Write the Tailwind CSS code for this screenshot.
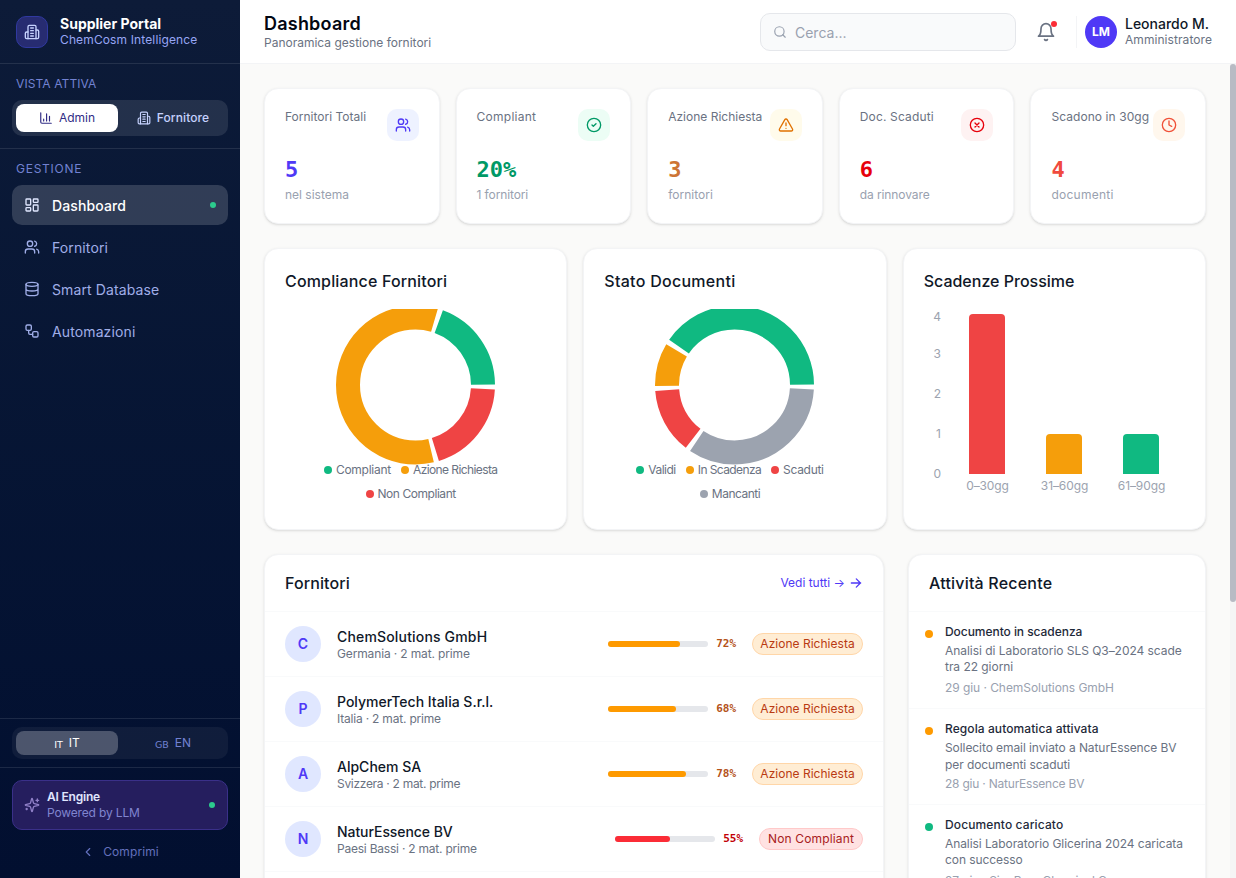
<!DOCTYPE html>
<html lang="it">

<head>
	<meta charset="UTF-8">
	<meta name="viewport" content="width=device-width, initial-scale=1.0">
	<title>Supplier Portal</title>
	<script src="https://cdn.jsdelivr.net/npm/@tailwindcss/browser@4"></script>
</head>

<body class="font-['Inter',sans-serif] bg-[#fafaf9] text-gray-900 h-screen flex overflow-hidden">
	<!-- Icons -->
	<svg class="hidden">
		<symbol id="i-building" viewBox="0 0 24 24"><path d="M6 22V4a2 2 0 0 1 2-2h8a2 2 0 0 1 2 2v18Z"/><path d="M6 12H4a2 2 0 0 0-2 2v6a2 2 0 0 0 2 2h2"/><path d="M18 9h2a2 2 0 0 1 2 2v9a2 2 0 0 1-2 2h-2"/><path d="M10 6h4M10 10h4M10 14h4M10 18h4"/></symbol>
		<symbol id="i-chart" viewBox="0 0 24 24"><path d="M3 3v16a2 2 0 0 0 2 2h16M18 17V9M13 17V5M8 17v-3"/></symbol>
		<symbol id="i-dashboard" viewBox="0 0 24 24"><rect width="7" height="9" x="3" y="3" rx="1"/><rect width="7" height="5" x="14" y="3" rx="1"/><rect width="7" height="9" x="14" y="12" rx="1"/><rect width="7" height="5" x="3" y="16" rx="1"/></symbol>
		<symbol id="i-users" viewBox="0 0 24 24"><path d="M16 21v-2a4 4 0 0 0-4-4H6a4 4 0 0 0-4 4v2"/><circle cx="9" cy="7" r="4"/><path d="M22 21v-2a4 4 0 0 0-3-3.87M16 3.13a4 4 0 0 1 0 7.75"/></symbol>
		<symbol id="i-database" viewBox="0 0 24 24"><ellipse cx="12" cy="5" rx="9" ry="3"/><path d="M3 5v14a9 3 0 0 0 18 0V5M3 12a9 3 0 0 0 18 0"/></symbol>
		<symbol id="i-workflow" viewBox="0 0 24 24"><rect width="8" height="8" x="3" y="3" rx="2"/><path d="M7 11v4a2 2 0 0 0 2 2h4"/><rect width="8" height="8" x="13" y="13" rx="2"/></symbol>
		<symbol id="i-sparkles" viewBox="0 0 24 24"><path d="M9.937 15.5A2 2 0 0 0 8.5 14.063l-6.135-1.582a.5.5 0 0 1 0-.962L8.5 9.936A2 2 0 0 0 9.937 8.5l1.582-6.135a.5.5 0 0 1 .963 0L14.063 8.5A2 2 0 0 0 15.5 9.937l6.135 1.581a.5.5 0 0 1 0 .964L15.5 14.063a2 2 0 0 0-1.437 1.437l-1.582 6.135a.5.5 0 0 1-.963 0z"/><path d="M20 3v4M22 5h-4M4 17v2M5 18H3"/></symbol>
		<symbol id="i-chevron" viewBox="0 0 24 24"><path d="m15 18-6-6 6-6"/></symbol>
		<symbol id="i-search" viewBox="0 0 24 24"><circle cx="11" cy="11" r="8"/><path d="m21 21-4.3-4.3"/></symbol>
		<symbol id="i-bell" viewBox="0 0 24 24"><path d="M6 8a6 6 0 0 1 12 0c0 7 3 9 3 9H3s3-2 3-9M10.3 21a1.94 1.94 0 0 0 3.4 0"/></symbol>
		<symbol id="i-check" viewBox="0 0 24 24"><circle cx="12" cy="12" r="10"/><path d="m9 12 2 2 4-4"/></symbol>
		<symbol id="i-alert" viewBox="0 0 24 24"><path d="m21.73 18-8-14a2 2 0 0 0-3.48 0l-8 14A2 2 0 0 0 4 21h16a2 2 0 0 0 1.73-3M12 9v4M12 17h.01"/></symbol>
		<symbol id="i-x" viewBox="0 0 24 24"><circle cx="12" cy="12" r="10"/><path d="m15 9-6 6M9 9l6 6"/></symbol>
		<symbol id="i-clock" viewBox="0 0 24 24"><circle cx="12" cy="12" r="10"/><path d="M12 6v6l4 2"/></symbol>
		<symbol id="i-arrow" viewBox="0 0 24 24"><path d="M4 12h16M12.5 5l7 7-7 7"/></symbol>
	</svg>

	<!-- Sidebar -->
	<aside class="w-60 shrink-0 flex flex-col bg-linear-to-b from-[#0d1b38] to-[#020f30] [&_svg]:fill-none [&_svg]:stroke-current [&_svg]:stroke-2 [&_svg]:[stroke-linecap:round] [&_svg]:[stroke-linejoin:round]">
		<div class="h-16 px-4 flex items-center gap-3 border-b border-white/10">
			<div class="size-8 rounded-[10px] bg-[#272c71] border border-[#3039a0] flex items-center justify-center text-indigo-200">
				<svg class="size-4"><use href="#i-building"/></svg>
			</div>
			<div>
				<div class="text-sm leading-4 font-bold text-white">Supplier Portal</div>
				<div class="text-xs leading-4 text-[#97a6f5] tracking-[0.13px]">ChemCosm Intelligence</div>
			</div>
		</div>

		<div class="h-[85px] px-3 pt-3 border-b border-white/10">
			<div class="px-1 text-xs leading-4 text-[#7282d2] tracking-[0.1px]">VISTA ATTIVA</div>
			<div class="mt-2 h-9 p-1 grid grid-cols-2 gap-1 rounded-[10px] bg-white/10 text-xs font-medium">
				<div class="rounded-lg bg-white text-[#312c85] font-normal flex items-center justify-center gap-1.5"><svg class="size-3.5"><use href="#i-chart"/></svg>Admin</div>
				<div class="text-indigo-200 flex items-center justify-center gap-1.5 tracking-[0.08px]"><svg class="size-3.5"><use href="#i-building"/></svg>Fornitore</div>
			</div>
		</div>

		<nav class="px-3 pt-3 flex-1">
			<div class="px-1 mb-2 text-xs leading-4 text-[#7282d2] tracking-[0.75px]">GESTIONE</div>
			<div class="grid gap-0.5 text-sm text-[#a0aee8] tracking-[0.12px] [&>a]:h-10 [&>a]:px-3 [&>a]:flex [&>a]:items-center [&>a]:gap-3 [&>a]:rounded-[10px]">
				<a class="bg-white/16 text-white font-medium"><svg class="size-4 text-indigo-100"><use href="#i-dashboard"/></svg><span class="pt-0.5">Dashboard</span><i class="ml-auto size-1.5 rounded-full bg-[#2ccb8d]"></i></a>
				<a><svg class="size-4"><use href="#i-users"/></svg><span class="pt-0.5">Fornitori</span></a>
				<a><svg class="size-4"><use href="#i-database"/></svg><span class="pt-0.5">Smart Database</span></a>
				<a><svg class="size-4"><use href="#i-workflow"/></svg><span class="pt-0.5">Automazioni</span></a>
			</div>
		</nav>

		<div class="h-[49px] shrink-0 px-3 pt-2 border-t border-white/10">
			<div class="h-8 p-1 grid grid-cols-2 gap-1 rounded-[10px] bg-white/5 text-xs">
				<div class="rounded-lg bg-white/25 text-white flex items-center justify-center gap-1.5"><span class="font-['DejaVu_Sans'] text-[9.5px] pt-1">IT</span>IT</div>
				<div class="text-[#7282d2] flex items-center justify-center gap-1.5"><span class="font-['DejaVu_Sans'] text-[9.5px] pt-1">GB</span>EN</div>
			</div>
		</div>
		<div class="h-[111px] shrink-0 px-3 pt-3 border-t border-white/10">
			<div class="h-[50px] pl-[11px] pr-3 flex items-center gap-[7px] rounded-[10px] bg-[#251e5e] border border-[#3a3089]">
				<svg class="size-4 text-[#9080c8]"><use href="#i-sparkles"/></svg>
				<div class="text-xs leading-4">
					<div class="font-semibold text-indigo-100 tracking-[-0.2px]">AI Engine</div>
					<div class="text-[#8085d0] tracking-[-0.15px]">Powered by LLM</div>
				</div>
				<span class="ml-auto size-1.5 rounded-full bg-[#2ccb8d]"></span>
			</div>
			<div class="mt-[14px] flex items-center justify-center gap-2 text-xs leading-4 text-[#6370bd] tracking-[0.1px]"><svg class="size-3.5"><use href="#i-chevron"/></svg>Comprimi</div>
		</div>
	</aside>

	<div class="flex-1 min-w-0 flex flex-col [&_svg]:[stroke-linecap:round] [&_svg]:[stroke-linejoin:round]">
		<!-- Header -->
		<header class="h-16 shrink-0 px-6 flex items-center bg-white border-b border-gray-100">
			<div>
				<h1 class="pt-px text-lg leading-5 font-semibold text-gray-950 tracking-[0.22px]">Dashboard</h1>
				<p class="mt-px text-xs leading-4 text-gray-500">Panoramica gestione fornitori</p>
			</div>
			<div class="ml-auto w-64 h-[38px] px-3 flex items-center gap-2 rounded-[10px] bg-gray-50 border border-gray-200 text-sm text-gray-400">
				<svg class="size-3.5 fill-none stroke-current stroke-2"><use href="#i-search"/></svg><span class="pt-0.5">Cerca...</span>
			</div>
			<div class="relative ml-5 text-gray-500">
				<svg class="size-5 fill-none stroke-current stroke-2"><use href="#i-bell"/></svg>
				<span class="absolute -top-px -right-px size-1.5 rounded-full bg-[#fb2c36]"></span>
			</div>
			<div class="ml-5 pl-2 h-8 flex items-center gap-2 border-l border-gray-100">
				<div class="size-8 rounded-full bg-[#4f39f6] text-white text-xs font-bold flex items-center justify-center">LM</div>
				<div>
					<div class="text-sm leading-4 font-medium">Leonardo M.</div>
					<div class="text-xs leading-4 text-gray-500 tracking-[0.07px]">Amministratore</div>
				</div>
			</div>
		</header>

		<div class="flex-1 min-h-0 flex">
			<main class="flex-1 min-w-0 p-6 overflow-hidden">
				<!-- KPI -->
				<div class="grid grid-cols-5 gap-4 [&>div]:h-34 [&>div]:p-5 [&>div]:rounded-[14px] [&>div]:bg-white [&>div]:border [&>div]:border-gray-100 [&>div]:shadow-sm">
					<div>
						<div class="flex justify-between text-xs text-gray-500 whitespace-nowrap">Fornitori Totali
							<span class="size-8 shrink-0 rounded-[10px] bg-indigo-50 text-[#4f39f6] flex items-center justify-center"><svg class="size-4 fill-none stroke-current stroke-2"><use href="#i-users"/></svg></span>
						</div>
						<div class="mt-[13px] font-['DejaVu_Sans_Mono',monospace] text-[22px] leading-8 font-bold text-[#4f39f6]">5</div>
						<div class="mt-px text-xs text-gray-400">nel sistema</div>
					</div>
					<div>
						<div class="flex justify-between text-xs text-gray-500 whitespace-nowrap tracking-[0.25px]">Compliant
							<span class="size-8 shrink-0 rounded-[10px] bg-emerald-50 text-[#009966] flex items-center justify-center"><svg class="size-4 fill-none stroke-current stroke-2"><use href="#i-check"/></svg></span>
						</div>
						<div class="mt-[13px] font-['DejaVu_Sans_Mono',monospace] text-[22px] leading-8 font-bold text-[#009966]">20%</div>
						<div class="mt-px text-xs text-gray-400 tracking-[-0.12px]">1 fornitori</div>
					</div>
					<div>
						<div class="flex justify-between text-xs text-gray-500 whitespace-nowrap">Azione Richiesta
							<span class="size-8 shrink-0 rounded-[10px] bg-amber-50 text-[#e17100] flex items-center justify-center"><svg class="size-4 fill-none stroke-current stroke-2"><use href="#i-alert"/></svg></span>
						</div>
						<div class="mt-[13px] font-['DejaVu_Sans_Mono',monospace] text-[22px] leading-8 font-bold text-[#cd7435]">3</div>
						<div class="mt-px text-xs text-gray-400">fornitori</div>
					</div>
					<div>
						<div class="flex justify-between text-xs text-gray-500 whitespace-nowrap tracking-[0.15px]">Doc. Scaduti
							<span class="size-8 shrink-0 rounded-[10px] bg-red-50 text-[#e7000b] flex items-center justify-center"><svg class="size-4 fill-none stroke-current stroke-2"><use href="#i-x"/></svg></span>
						</div>
						<div class="mt-[13px] font-['DejaVu_Sans_Mono',monospace] text-[22px] leading-8 font-bold text-[#e7000b]">6</div>
						<div class="mt-px text-xs text-gray-400 tracking-[-0.1px]">da rinnovare</div>
					</div>
					<div>
						<div class="flex justify-between text-xs text-gray-500 whitespace-nowrap tracking-[0.07px]">Scadono in 30gg
							<span class="size-8 shrink-0 rounded-[10px] bg-orange-50 text-[#f05138] flex items-center justify-center"><svg class="size-4 fill-none stroke-current stroke-2"><use href="#i-clock"/></svg></span>
						</div>
						<div class="mt-[13px] font-['DejaVu_Sans_Mono',monospace] text-[22px] leading-8 font-bold text-[#f04a3e]">4</div>
						<div class="mt-px text-xs text-gray-400 tracking-[0.25px]">documenti</div>
					</div>
				</div>

				<!-- Charts -->
				<div class="mt-6 grid grid-cols-3 gap-4 [&>div]:h-[282px] [&>div]:p-5 [&>div]:rounded-[14px] [&>div]:bg-white [&>div]:border [&>div]:border-gray-100 [&>div]:shadow-sm">
					<div>
						<h2 class="font-medium tracking-[0.16px]">Compliance Fornitori</h2>
						<svg class="mt-4 mx-auto block w-40 h-[156px] [&_circle]:[stroke-linecap:butt]" viewBox="0 0 160 156" fill="none" stroke-width="24">
							<g transform="translate(79.5 76) scale(1 -1)">
								<circle r="67.5" pathLength="360" stroke="#10b981" stroke-dasharray="69.4 290.6" stroke-dashoffset="-0.4"/>
								<circle r="67.5" pathLength="360" stroke="#f59e0b" stroke-dasharray="209.8 150.2" stroke-dashoffset="-73.6"/>
								<circle r="67.5" pathLength="360" stroke="#ef4444" stroke-dasharray="69.4 290.6" stroke-dashoffset="-287.2"/>
							</g>
						</svg>
						<div class="-mt-[7px] pr-2.5 flex flex-wrap justify-center gap-x-2.5 text-xs leading-6 text-gray-500 tracking-[-0.3px]">
							<span class="flex items-center gap-1 tracking-[-0.25px]"><i class="size-2 rounded-full bg-[#10b981]"></i>Compliant</span>
							<span class="flex items-center gap-1 tracking-[-0.6px]"><i class="size-2 rounded-full bg-[#f59e0b]"></i>Azione Richiesta</span>
							<span class="flex items-center gap-1 tracking-[-0.45px]"><i class="size-2 rounded-full bg-[#ef4444]"></i>Non Compliant</span>
						</div>
					</div>
					<div>
						<h2 class="font-medium tracking-[0.28px]">Stato Documenti</h2>
						<svg class="mt-4 mx-auto block w-40 h-[156px] [&_circle]:[stroke-linecap:butt]" viewBox="0 0 160 156" fill="none" stroke-width="24">
							<g transform="translate(79.5 76) scale(1 -1)">
								<circle r="67.5" pathLength="360" stroke="#10b981" stroke-dasharray="144.9 215.1" stroke-dashoffset="-0.4"/>
								<circle r="67.5" pathLength="360" stroke="#f59e0b" stroke-dasharray="31.6 328.4" stroke-dashoffset="-149.1"/>
								<circle r="67.5" pathLength="360" stroke="#ef4444" stroke-dasharray="47.8 312.2" stroke-dashoffset="-184.4"/>
								<circle r="67.5" pathLength="360" stroke="#9ca3af" stroke-dasharray="120.6 239.4" stroke-dashoffset="-236"/>
							</g>
						</svg>
						<div class="-mt-[7px] pr-2.5 flex flex-wrap justify-center gap-x-2.5 text-xs leading-6 text-gray-500 tracking-[-0.5px]">
							<span class="flex items-center gap-1"><i class="size-2 rounded-full bg-[#10b981]"></i>Validi</span>
							<span class="flex items-center gap-1 tracking-[-0.6px]"><i class="size-2 rounded-full bg-[#f59e0b]"></i>In Scadenza</span>
							<span class="flex items-center gap-1 tracking-[-0.3px]"><i class="size-2 rounded-full bg-[#ef4444]"></i>Scaduti</span>
							<span class="flex items-center gap-1"><i class="size-2 rounded-full bg-[#9ca3af]"></i>Mancanti</span>
						</div>
					</div>
					<div>
						<h2 class="font-medium">Scadenze Prossime</h2>
						<svg class="mt-4 block w-[261px] h-[200px] text-xs" viewBox="0 0 261 200">
							<g fill="#9ca3af" text-anchor="end">
								<text x="17" y="12">4</text>
								<text x="17" y="49">3</text>
								<text x="17" y="89">2</text>
								<text x="17" y="129">1</text>
								<text x="17" y="169">0</text>
							</g>
							<path fill="#ef4444" d="M45 165V9a4 4 0 0 1 4-4h28a4 4 0 0 1 4 4v156z"/>
							<path fill="#f59e0b" d="M122 165v-36a4 4 0 0 1 4-4h28a4 4 0 0 1 4 4v36z"/>
							<path fill="#10b981" d="M199 165v-36a4 4 0 0 1 4-4h28a4 4 0 0 1 4 4v36z"/>
							<g fill="#9ca3af" text-anchor="middle" letter-spacing="-0.1">
								<text x="63.5" y="181">0–30gg</text>
								<text x="140.5" y="181">31–60gg</text>
								<text x="217.5" y="181">61–90gg</text>
							</g>
						</svg>
					</div>
				</div>

				<div class="mt-6 grid grid-cols-3 gap-6">
					<!-- Fornitori -->
					<section class="col-span-2 rounded-[14px] bg-white border border-gray-100 shadow-sm [&>div]:h-[65px] [&>div]:px-5 [&>div]:flex [&>div]:items-center [&>div]:border-b [&>div]:border-gray-50">
						<header class="h-[57px] px-5 flex items-center justify-between border-b border-gray-50">
							<h2 class="font-medium tracking-[0.1px]">Fornitori</h2>
							<a class="flex items-center gap-1 text-xs text-[#4f39f6]">Vedi tutti → <svg class="size-3.5 fill-none stroke-current stroke-[2.2]"><use href="#i-arrow"/></svg></a>
						</header>
						<div>
							<span class="size-9 rounded-full bg-indigo-100 text-[#4f39f6] text-sm font-semibold flex items-center justify-center">C</span>
							<div class="ml-4 mr-auto pt-0.5"><p class="text-sm leading-[18px] font-medium tracking-[0.17px]">ChemSolutions GmbH</p><p class="text-xs leading-4 text-gray-500 tracking-[-0.14px]">Germania · 2 mat. prime</p></div>
							<span class="w-[100px] h-1.5 rounded-full bg-gray-200"><i class="block h-full rounded-full bg-[#fe9a00]" style="width: 72%"></i></span>
							<span class="ml-2 mr-4 font-['DejaVu_Sans_Mono',monospace] text-[11px] font-bold tracking-[-0.02px] text-[#b4531a]">72%</span>
							<span class="w-[111px] h-[22px] rounded-full bg-[#ffedd4] border border-[#ffd6a8] text-[#b93a12] text-xs flex items-center justify-center tracking-[0.02px]">Azione Richiesta</span>
						</div>
						<div>
							<span class="size-9 rounded-full bg-indigo-100 text-[#4f39f6] text-sm font-semibold flex items-center justify-center">P</span>
							<div class="ml-4 mr-auto pt-0.5"><p class="text-sm leading-[18px] font-medium">PolymerTech Italia S.r.l.</p><p class="text-xs leading-4 text-gray-500 tracking-[-0.2px]">Italia · 2 mat. prime</p></div>
							<span class="w-[100px] h-1.5 rounded-full bg-gray-200"><i class="block h-full rounded-full bg-[#fe9a00]" style="width: 68%"></i></span>
							<span class="ml-2 mr-4 font-['DejaVu_Sans_Mono',monospace] text-[11px] font-bold tracking-[-0.02px] text-[#b4531a]">68%</span>
							<span class="w-[111px] h-[22px] rounded-full bg-[#ffedd4] border border-[#ffd6a8] text-[#b93a12] text-xs flex items-center justify-center tracking-[0.02px]">Azione Richiesta</span>
						</div>
						<div>
							<span class="size-9 rounded-full bg-indigo-100 text-[#4f39f6] text-sm font-semibold flex items-center justify-center">A</span>
							<div class="ml-4 mr-auto pt-0.5"><p class="text-sm leading-[18px] font-medium">AlpChem SA</p><p class="text-xs leading-4 text-gray-500 tracking-[-0.3px]">Svizzera · 2 mat. prime</p></div>
							<span class="w-[100px] h-1.5 rounded-full bg-gray-200"><i class="block h-full rounded-full bg-[#fe9a00]" style="width: 78%"></i></span>
							<span class="ml-2 mr-4 font-['DejaVu_Sans_Mono',monospace] text-[11px] font-bold tracking-[-0.02px] text-[#b4531a]">78%</span>
							<span class="w-[111px] h-[22px] rounded-full bg-[#ffedd4] border border-[#ffd6a8] text-[#b93a12] text-xs flex items-center justify-center tracking-[0.02px]">Azione Richiesta</span>
						</div>
						<div>
							<span class="size-9 rounded-full bg-indigo-100 text-[#4f39f6] text-sm font-semibold flex items-center justify-center">N</span>
							<div class="ml-4 mr-auto pt-0.5"><p class="text-sm leading-[18px] font-medium tracking-[-0.07px]">NaturEssence BV</p><p class="text-xs leading-4 text-gray-500 tracking-[-0.22px]">Paesi Bassi · 2 mat. prime</p></div>
							<span class="w-[100px] h-1.5 rounded-full bg-gray-200"><i class="block h-full rounded-full bg-[#fb2c36]" style="width: 55%"></i></span>
							<span class="ml-2 mr-4 font-['DejaVu_Sans_Mono',monospace] text-[11px] font-bold tracking-[-0.02px] text-[#c10007]">55%</span>
							<span class="w-[104px] h-[22px] rounded-full bg-[#ffe2e2] border border-[#ffc9c9] text-[#a82020] text-xs flex items-center justify-center tracking-[0.15px]">Non Compliant</span>
						</div>
						<div></div>
					</section>

					<!-- Attività -->
					<section class="rounded-[14px] bg-white border border-gray-100 shadow-sm">
						<header class="h-[57px] px-5 flex items-center border-b border-gray-50">
							<h2 class="font-medium tracking-[0.2px]">Attività Recente</h2>
						</header>
						<div class="text-xs text-gray-500 [&>div]:h-[96.5px] [&>div]:pt-3 [&>div]:pl-4 [&>div]:flex [&>div]:gap-3 [&>div]:border-b [&>div]:border-gray-50 [&_i]:mt-1.5 [&_i]:size-2 [&_i]:shrink-0 [&_i]:rounded-full [&_p]:whitespace-nowrap">
							<div>
								<i class="bg-[#fe9a00]"></i>
								<div>
									<h3 class="leading-4 font-medium text-gray-800 tracking-[-0.05px]">Documento in scadenza</h3>
									<p class="mt-[3px] leading-4 tracking-[-0.04px]">Analisi di Laboratorio SLS Q3–2024 scade<br>tra 22 giorni</p>
									<p class="mt-[5px] leading-4 text-gray-400 tracking-[-0.06px]">29 giu · ChemSolutions GmbH</p>
								</div>
							</div>
							<div>
								<i class="bg-[#fe9a00]"></i>
								<div>
									<h3 class="leading-4 font-medium text-gray-800 tracking-[0.08px]">Regola automatica attivata</h3>
									<p class="mt-0.5 leading-[17px] tracking-[-0.08px]">Sollecito email inviato a NaturEssence BV<br>per documenti scaduti</p>
									<p class="mt-[3px] leading-4 text-gray-400 tracking-[-0.22px]">28 giu · NaturEssence BV</p>
								</div>
							</div>
							<div>
								<i class="bg-[#10b981]"></i>
								<div>
									<h3 class="leading-4 font-medium text-gray-800 tracking-[0.12px]">Documento caricato</h3>
									<p class="mt-[3px] leading-4 tracking-[-0.08px]">Analisi Laboratorio Glicerina 2024 caricata<br>con successo</p>
									<p class="mt-[5px] leading-4 text-gray-400 tracking-[-0.1px]">27 giu · SinoPure Chemical Co.</p>
								</div>
							</div>
						</div>
					</section>
				</div>
			</main>
			<!-- Scrollbar -->
			<div class="w-1.5 shrink-0 bg-[#f5f5f5]"><div class="h-[538px] rounded-full bg-[#b8bbc4]"></div></div>
		</div>
	</div>
</body>

</html>
